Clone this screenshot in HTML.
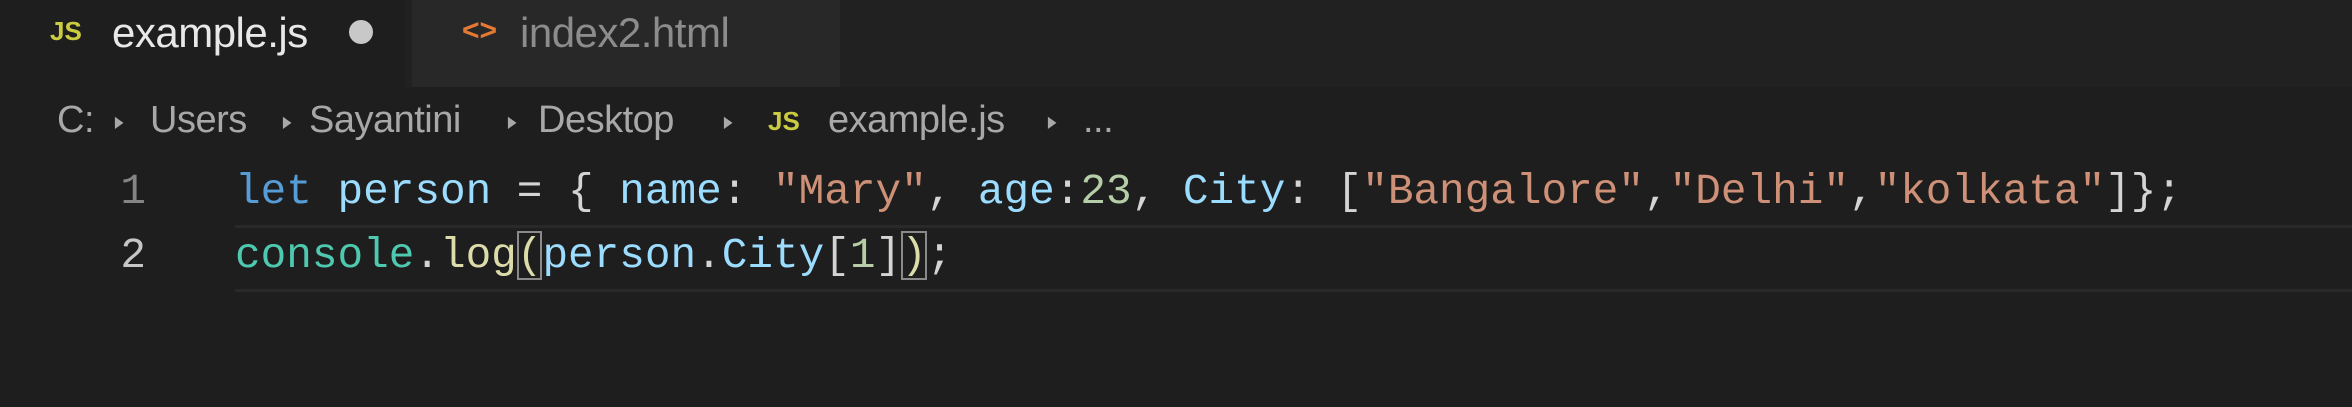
<!DOCTYPE html>
<html><head><meta charset="utf-8"><style>
html,body{margin:0;padding:0;}
body{width:2352px;height:407px;background:#1e1e1e;position:relative;overflow:hidden;font-family:"Liberation Sans",sans-serif;}
.a{position:absolute;white-space:pre;}
#tabbar{position:absolute;left:0;top:0;width:2352px;height:87px;background:#212121;}
#tab1{position:absolute;left:0;top:0;width:405px;height:87px;background:#1e1e1e;}
#tab2{position:absolute;left:412px;top:0;width:428px;height:87px;background:#282828;}
.crumb{font-size:38px;color:#a8a8a8;top:99px;letter-spacing:-0.5px;}
.arr{font-size:16px;color:#a8a8a8;top:112px;transform:scaleX(0.7);}
.code{font-family:"Liberation Mono",monospace;font-size:42.7px;line-height:64px;}
.kw{color:#569cd6}.v{color:#9cdcfe}.s{color:#ce9178}.p{color:#d4d4d4}.c{color:#4ec9b0}.f{color:#dcdcaa}.n{color:#b5cea8}
.box{outline:2px solid #8a8a8a;outline-offset:-2px;}
</style></head><body>
<div id="tabbar"></div>
<div id="tab1"></div>
<div id="tab2"></div>
<div class="a" style="left:50px;top:16px;font-size:26px;font-weight:bold;color:#cbcb41;">JS</div>
<div class="a" style="left:112px;top:9px;font-size:42px;color:#e8e8e8;letter-spacing:-0.5px;">example.js</div>
<div class="a" style="left:349px;top:20px;width:24px;height:24px;border-radius:50%;background:#c8c8c8;"></div>
<div class="a" style="left:462px;top:14px;font-size:30px;font-weight:bold;color:#e37933;">&lt;&gt;</div>
<div class="a" style="left:520px;top:9px;font-size:42px;color:#8c8c8c;letter-spacing:-0.5px;">index2.html</div>

<div class="a crumb" style="left:57px;">C:</div>
<div class="a arr" style="left:113px;">▶</div>
<div class="a crumb" style="left:150px;">Users</div>
<div class="a arr" style="left:281px;">▶</div>
<div class="a crumb" style="left:309px;">Sayantini</div>
<div class="a arr" style="left:506px;">▶</div>
<div class="a crumb" style="left:538px;">Desktop</div>
<div class="a arr" style="left:722px;">▶</div>
<div class="a" style="left:768px;top:106px;font-size:26px;font-weight:bold;color:#cbcb41;">JS</div>
<div class="a crumb" style="left:828px;">example.js</div>
<div class="a arr" style="left:1046px;">▶</div>
<div class="a crumb" style="left:1083px;">...</div>

<div class="a" style="left:235px;top:225px;width:2117px;height:61px;border-top:3px solid #292929;border-bottom:3px solid #292929;"></div>

<div class="a code" style="left:98px;top:160px;width:48px;text-align:right;color:#858585;">1</div>
<div class="a code" style="left:98px;top:224px;width:48px;text-align:right;color:#c6c6c6;">2</div>
<div class="a code" style="left:235px;top:160px;"><span class="kw">let</span><span class="p"> </span><span class="v">person</span><span class="p"> = { </span><span class="v">name</span><span class="p">: </span><span class="s">"Mary"</span><span class="p">, </span><span class="v">age</span><span class="p">:</span><span class="n">23</span><span class="p">, </span><span class="v">City</span><span class="p">: [</span><span class="s">"Bangalore"</span><span class="p">,</span><span class="s">"Delhi"</span><span class="p">,</span><span class="s">"kolkata"</span><span class="p">]};</span></div>
<div class="a code" style="left:235px;top:224px;"><span class="c">console</span><span class="p">.</span><span class="f">log</span><span class="f box">(</span><span class="v">person</span><span class="p">.</span><span class="v">City</span><span class="p">[</span><span class="n">1</span><span class="p">]</span><span class="f box">)</span><span class="p">;</span></div>
</body></html>
